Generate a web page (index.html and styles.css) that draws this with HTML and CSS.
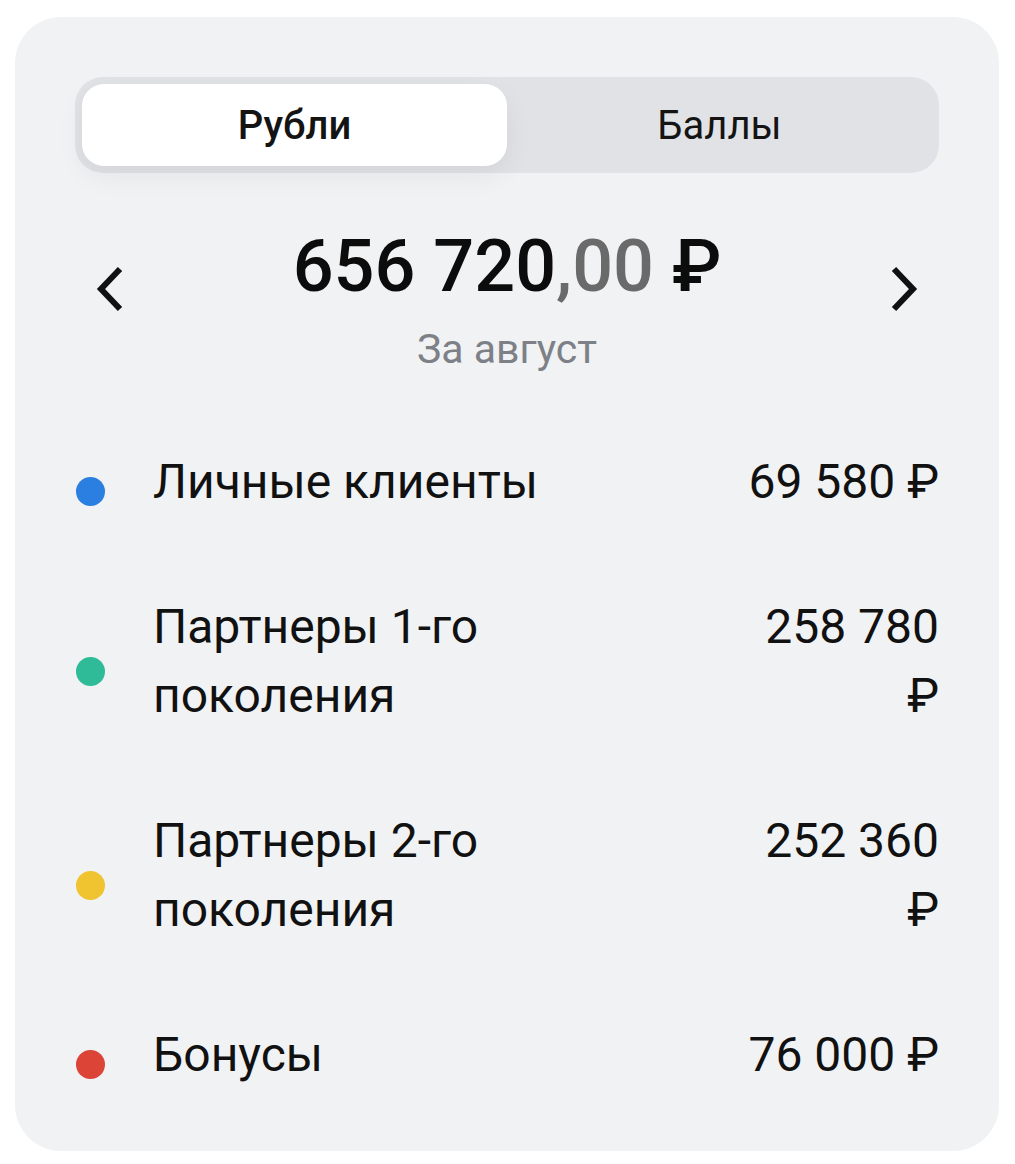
FILE: index.html
```html
<!DOCTYPE html>
<html lang="ru">
<head>
<meta charset="utf-8">
<link rel="stylesheet" href="styles.css">
</head>
<body>
<div class="card">
  <div class="toggle">
    <div class="tab tab-active">Рубли</div>
    <div class="tab">Баллы</div>
  </div>
  <div class="summary">
    <button class="nav" aria-label="Предыдущий месяц">
      <svg width="30" height="46" viewBox="0 0 30 46"><path d="M25 3 L6 23 L25 43" fill="none" stroke="#111" stroke-width="6" stroke-linecap="butt" stroke-linejoin="miter"/></svg>
    </button>
    <div class="total">
      <div class="amount">656 720<span class="cents">,00</span> ₽</div>
      <div class="period">За август</div>
    </div>
    <button class="nav" aria-label="Следующий месяц">
      <svg width="30" height="46" viewBox="0 0 30 46"><path d="M5 3 L24 23 L5 43" fill="none" stroke="#111" stroke-width="6" stroke-linecap="butt" stroke-linejoin="miter"/></svg>
    </button>
  </div>
  <ul class="list">
    <li class="row"><span class="dot dot-blue"></span><span class="label">Личные клиенты</span><span class="value">69 580 ₽</span></li>
    <li class="row"><span class="dot dot-green"></span><span class="label">Партнеры 1-го поколения</span><span class="value">258 780 ₽</span></li>
    <li class="row"><span class="dot dot-yellow"></span><span class="label">Партнеры 2-го поколения</span><span class="value">252 360 ₽</span></li>
    <li class="row"><span class="dot dot-red"></span><span class="label">Бонусы</span><span class="value">76 000 ₽</span></li>
  </ul>
</div>
</body>
</html>
```

FILE: styles.css
```css
html, body {
  margin: 0;
  padding: 0;
  background: #ffffff;
}
body {
  font-family: Roboto, "Noto Sans", "Liberation Sans", sans-serif;
  color: #111111;
}
.card {
  box-sizing: border-box;
  margin: 17px 16px 0 15px;
  width: 984px;
  height: 1134px;
  background: #f1f2f4;
  border-radius: 46px;
  padding: 60px 60px 0 60px;
}
.toggle {
  display: flex;
  height: 96px;
  box-sizing: border-box;
  padding: 7px;
  background: #e1e2e6;
  border-radius: 28px;
}
.tab {
  flex: 1;
  display: flex;
  align-items: center;
  justify-content: center;
  font-size: 40px;
  color: #141414;
  border-radius: 22px;
}
.tab-active {
  background: #ffffff;
  font-weight: 500;
  box-shadow: 0 10px 28px rgba(0, 0, 0, 0.06);
}
.summary {
  display: flex;
  align-items: flex-start;
  justify-content: space-between;
  margin-top: 54px;
}
.nav {
  border: 0;
  background: none;
  padding: 0;
  width: 70px;
  height: 70px;
  margin-top: 27px;
  display: flex;
  align-items: center;
  justify-content: center;
}
.total {
  text-align: center;
}
.amount {
  font-size: 72px;
  font-weight: 500;
  line-height: 80px;
  color: #0c0c0c;
}
.cents {
  color: #6a6a6a;
}
.period {
  margin-top: 18px;
  font-size: 41px;
  line-height: 48px;
  color: #7d8086;
}
.list {
  list-style: none;
  margin: 74px 0 0 0;
  padding: 0;
  display: flex;
  flex-direction: column;
  gap: 76px;
}
.row {
  display: grid;
  grid-template-columns: 78px 1fr 195px;
  align-items: center;
  font-size: 48px;
  line-height: 69px;
  color: #111111;
}
.dot {
  width: 29px;
  height: 29px;
  border-radius: 50%;
  margin-top: 20px;
  margin-left: 1px;
}
.dot-blue { background: #2b7fe0; }
.dot-green { background: #2fba98; }
.dot-yellow { background: #f0c330; }
.dot-red { background: #db4437; }
.label {
  padding-right: 60px;
}
.value {
  text-align: right;
}
```
